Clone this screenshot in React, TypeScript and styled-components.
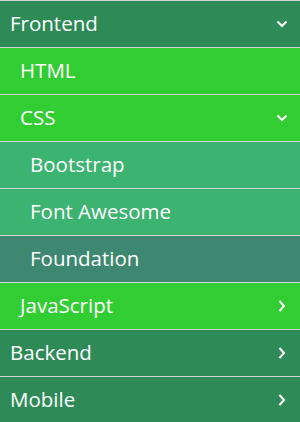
import React from 'react'
import styled, { createGlobalStyle } from 'styled-components'

const GlobalStyle = createGlobalStyle`
  html, body {
    margin: 0;
    padding: 0;
    background: #ffffff;
  }
`

const Menu = styled.ul`
  list-style: none;
  margin: 0;
  padding: 0;
  width: 300px;
  font-family: 'Open Sans', 'Noto Sans', sans-serif;
`

const Row = styled.li<{ $bg: string; $level: number }>`
  display: flex;
  align-items: center;
  justify-content: space-between;
  height: 46px;
  border-top: 1px solid #d4d4d4;
  background: ${(p) => p.$bg};
  padding: 0 12px 0 ${(p) => 10 + p.$level * 10}px;
  color: #ffffff;
  font-size: 20.5px;
  cursor: pointer;
`

const Label = styled.span`
  line-height: 1;
  padding-bottom: 2px;
`

const Chevron = ({ open }: { open: boolean }) => (
  <svg width="12" height="12" viewBox="0 0 12 12" fill="none">
    {open ? (
      <path d="M1.5 3.5 L6 8 L10.5 3.5" stroke="#fff" strokeWidth="2" />
    ) : (
      <path d="M3.5 1 L8 6 L3.5 11" stroke="#fff" strokeWidth="2" />
    )}
  </svg>
)

const DARK = '#2e8b57'
const LIME = '#32cd32'
const MID = '#3cb371'
const HOVER = '#3e8770'

type Item = { label: string; level: number; bg: string; arrow?: 'open' | 'closed' }

const items: Item[] = [
  { label: 'Frontend', level: 0, bg: DARK, arrow: 'open' },
  { label: 'HTML', level: 1, bg: LIME },
  { label: 'CSS', level: 1, bg: LIME, arrow: 'open' },
  { label: 'Bootstrap', level: 2, bg: MID },
  { label: 'Font Awesome', level: 2, bg: MID },
  { label: 'Foundation', level: 2, bg: HOVER },
  { label: 'JavaScript', level: 1, bg: LIME, arrow: 'closed' },
  { label: 'Backend', level: 0, bg: DARK, arrow: 'closed' },
  { label: 'Mobile', level: 0, bg: DARK, arrow: 'closed' },
]

const App = () => {
  return (
    <>
      <GlobalStyle />
      <Menu>
        {items.map((it) => (
          <Row key={it.label} $bg={it.bg} $level={it.level}>
            <Label>{it.label}</Label>
            {it.arrow && <Chevron open={it.arrow === 'open'} />}
          </Row>
        ))}
      </Menu>
    </>
  )
}

export default App
